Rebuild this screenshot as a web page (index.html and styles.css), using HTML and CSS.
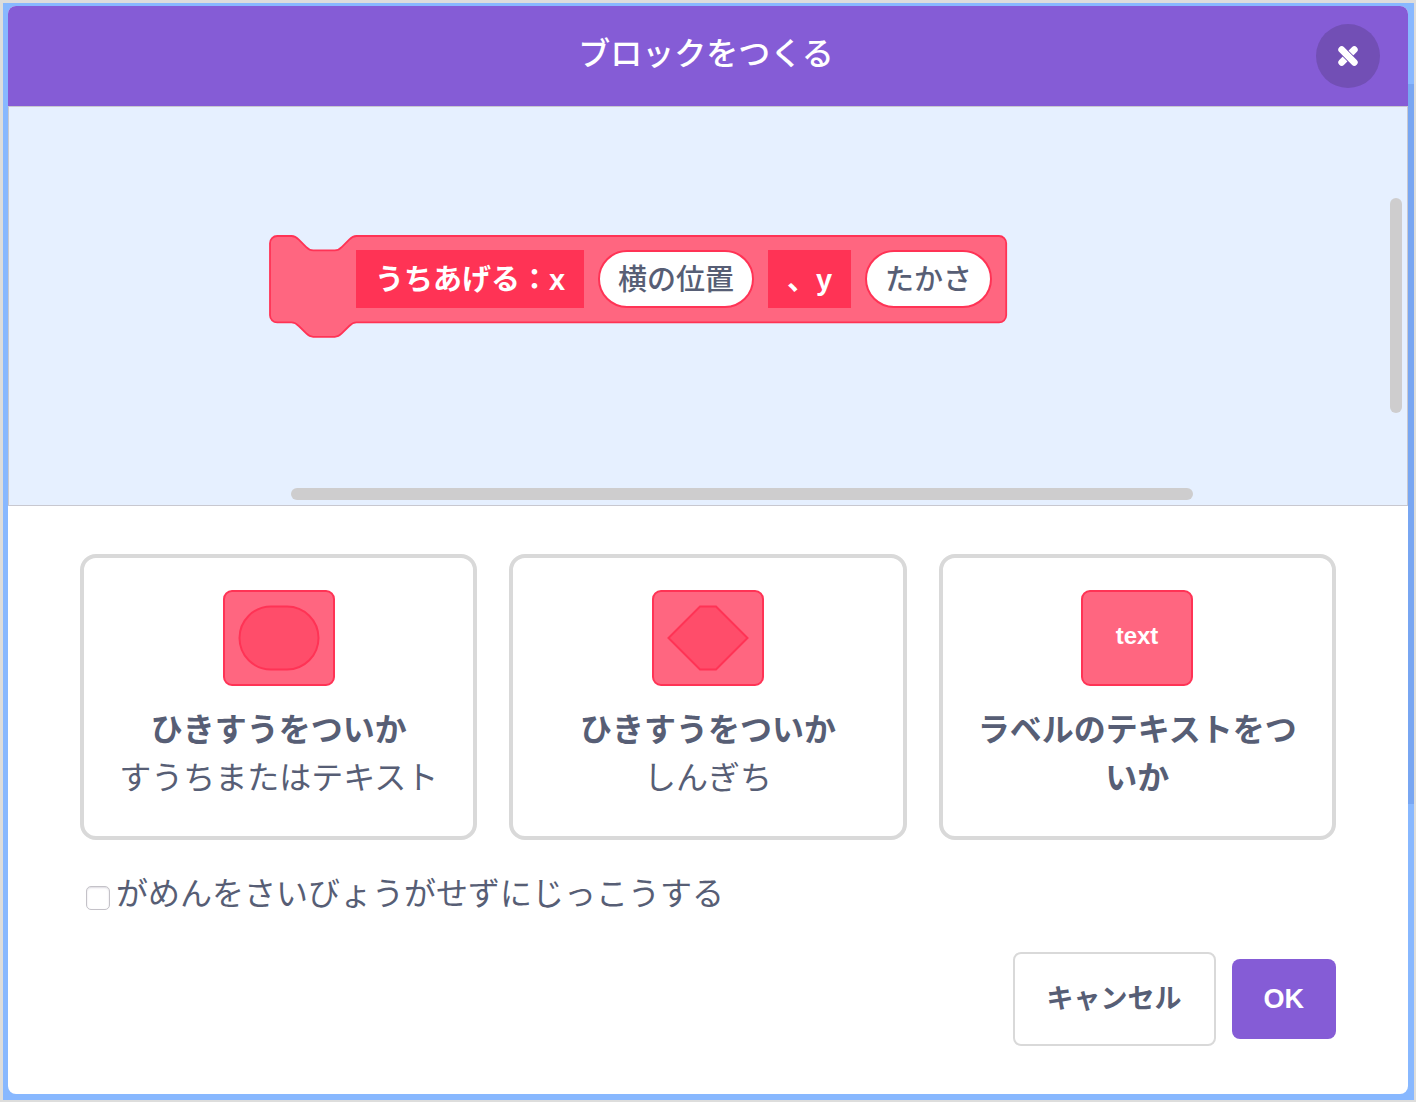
FILE: index.html
```html
<!DOCTYPE html>
<html lang="ja">
<head>
<meta charset="utf-8">
<meta name="viewport" content="width=device-width, initial-scale=1">
<title>ブロックをつくる</title>
<link rel="stylesheet" href="styles.css">
</head>
<body>
<div class="backdrop">
  <main class="dialog" role="dialog" aria-labelledby="dialog-title">
    <header class="header">
      <h1 class="title" id="dialog-title">ブロックをつくる</h1>
      <button class="close" type="button" aria-label="とじる">
        <svg width="20" height="20" viewBox="0 0 20 20" aria-hidden="true">
          <path d="M16.300 3.700L3.700 16.300" stroke="#fff" stroke-width="6.800" stroke-linecap="round"/>
          <path d="M5.500 5.500L14.500 14.500" stroke="#724fb5" stroke-width="8.400"/>
          <path d="M3.700 3.700L16.300 16.300" stroke="#fff" stroke-width="6.800" stroke-linecap="round"/>
        </svg>
      </button>
    </header>

    <section class="workspace" aria-label="ブロック">
      <div class="block">
        <svg class="block-shape" width="740" height="104" viewBox="-1 -1 740 104" aria-hidden="true">
          <g transform="scale(1.8)">
            <path d="M0 4A4 4 0 0 1 4 0H12c2 0 3 1 4 2l4 4c1 1 2 2 4 2h12c2 0 3-1 4-2l4-4c1-1 2-2 4-2H405a4 4 0 0 1 4 4V44a4 4 0 0 1-4 4H48c-2 0-3 1-4 2l-4 4c-1 1-2 2-4 2h-12c-2 0-3-1-4-2l-4-4c-1-1-2-2-4-2H4a4 4 0 0 1-4-4z" fill="#ff6680" stroke="#ff3355"/>
          </g>
        </svg>
        <input class="field label-long" type="text" value="うちあげる：x" aria-label="ラベル 1">
        <input class="field oval oval-long" type="text" value="横の位置" aria-label="ひきすう 1">
        <input class="field label-short" type="text" value="、y" aria-label="ラベル 2">
        <input class="field oval oval-short" type="text" value="たかさ" aria-label="ひきすう 2">
      </div>
      <div class="scrollbar scrollbar-y"></div>
      <div class="scrollbar scrollbar-x"></div>
    </section>

    <div class="body">
      <div class="options">
        <button class="option" type="button">
          <svg width="112" height="96" viewBox="0 0 112 96" aria-hidden="true">
            <rect x="1" y="1" width="110" height="94" rx="8" fill="#ff6680" stroke="#ff3355" stroke-width="2"/>
            <rect x="16.500" y="16.500" width="79" height="63" rx="31.500" fill="#ff4d6a" stroke="#ff3355" stroke-width="2"/>
          </svg>
          <span class="option-text"><strong>ひきすうをついか</strong><span>すうちまたはテキスト</span></span>
        </button>
        <button class="option" type="button">
          <svg width="112" height="96" viewBox="0 0 112 96" aria-hidden="true">
            <rect x="1" y="1" width="110" height="94" rx="8" fill="#ff6680" stroke="#ff3355" stroke-width="2"/>
            <path d="M16.500 48L48 16.500H64L95.500 48L64 79.500H48Z" fill="#ff4d6a" stroke="#ff3355" stroke-width="2"/>
          </svg>
          <span class="option-text"><strong>ひきすうをついか</strong><span>しんぎち</span></span>
        </button>
        <button class="option" type="button">
          <svg width="112" height="96" viewBox="0 0 112 96" aria-hidden="true">
            <rect x="1" y="1" width="110" height="94" rx="8" fill="#ff6680" stroke="#ff3355" stroke-width="2"/>
            <text class="icon-text" x="56" y="54" text-anchor="middle">text</text>
          </svg>
          <span class="option-text"><strong>ラベルのテキストをついか</strong></span>
        </button>
      </div>

      <label class="check-row">
        <input class="check" type="checkbox">
        <span>がめんをさいびょうがせずにじっこうする</span>
      </label>

      <div class="actions">
        <button class="button cancel" type="button">キャンセル</button>
        <button class="button ok" type="button">OK</button>
      </div>
    </div>
  </main>
</div>
</body>
</html>
```
FILE: styles.css
```css
* {
  box-sizing: border-box;
}

body {
  margin: 0;
  color: #575e75;
  font-family: "Liberation Sans", "Noto Sans CJK JP", sans-serif;
  font-size: 32px;
  line-height: 48px;
}

button,
input {
  margin: 0;
  color: inherit;
  font: inherit;
}

.backdrop {
  display: flex;
  min-height: 100vh;
  padding: 3px 6px 6px 5px;
  border: solid #dddddc;
  border-width: 3px 2px 2px 3px;
  background: linear-gradient(#78a6f2, #78a6f2) right 0 top 81px / 6px 720px no-repeat #88b8ff;
}

.dialog {
  display: flex;
  flex: 1;
  flex-direction: column;
  overflow: hidden;
  border-radius: 8px;
  background: #fff;
}

.header {
  display: grid;
  grid-template-columns: 64px 1fr 64px;
  align-items: center;
  height: 100px;
  padding: 0 28px;
  background: #855cd6;
  color: #fff;
}

.title {
  grid-column: 2;
  margin: 0;
  padding: 0 4px 4px 0;
  font-size: 32px;
  font-weight: 500;
  text-align: center;
}

.close {
  display: flex;
  align-items: center;
  justify-content: center;
  width: 64px;
  height: 64px;
  padding: 0;
  border: 0;
  border-radius: 50%;
  background: #724fb5;
}

.workspace {
  position: relative;
  height: 400px;
  border: 1px solid #c8c8d0;
  background: #e6f0ff;
}

.block {
  position: absolute;
  top: 129px;
  left: 261px;
  display: flex;
  gap: 14px;
  width: 738px;
  padding: 14px 15px 30px 86px;
}

.block-shape {
  position: absolute;
  top: -1px;
  left: -1px;
}

.field {
  position: relative;
  height: 58px;
  padding: 0 0 4px;
  border: 0;
  background: #ff3355;
  color: #fff;
  font-size: 29px;
  font-weight: 700;
  text-align: center;
}

.label-long {
  width: 228px;
}

.label-short {
  width: 83px;
}

.oval {
  border: 2px solid #ff3355;
  border-radius: 29px;
  background: #fff;
  color: #575e75;
  font-weight: 500;
}

.oval-long {
  width: 156px;
}

.oval-short {
  width: 127px;
}

.scrollbar {
  position: absolute;
  border-radius: 6px;
  background: #cecdce;
}

.scrollbar-y {
  top: 91px;
  right: 5px;
  width: 12px;
  height: 215px;
}

.scrollbar-x {
  right: 214px;
  bottom: 5px;
  left: 282px;
  height: 12px;
}

.body {
  padding: 48px 72px;
}

.options {
  display: grid;
  grid-template-columns: repeat(3, 1fr);
  gap: 32px;
}

.option {
  display: flex;
  flex-direction: column;
  gap: 20px;
  align-items: center;
  min-height: 286px;
  padding: 32px 28px;
  border: 4px solid #d9d9d9;
  border-radius: 16px;
  background: #fff;
}

.option-text {
  display: flex;
  flex-direction: column;
}

.icon-text {
  fill: #fff;
  font-size: 24px;
  font-weight: 700;
}

.check-row {
  display: flex;
  gap: 6px;
  align-items: center;
  width: fit-content;
  margin-top: 30px;
  padding-left: 6px;
}

.check {
  width: 24px;
  height: 24px;
  margin-top: 8px;
  border: 1px solid #c4c2c8;
  border-radius: 5px;
  background: #fff;
  box-shadow: inset 0 1px 2px #dcdae0;
  appearance: none;
}

.check:checked {
  background: #855cd6;
}

.actions {
  display: flex;
  gap: 16px;
  align-items: center;
  justify-content: flex-end;
  margin-top: 34px;
}

.button {
  padding: 24px 32px;
  border: 0;
  border-radius: 8px;
  font-size: 27px;
  font-weight: 700;
  line-height: 32px;
}

.cancel {
  border: 2px solid #d9d9d9;
  background: #fff;
  line-height: 42px;
}

.ok {
  background: #855cd6;
  color: #fff;
}
```
